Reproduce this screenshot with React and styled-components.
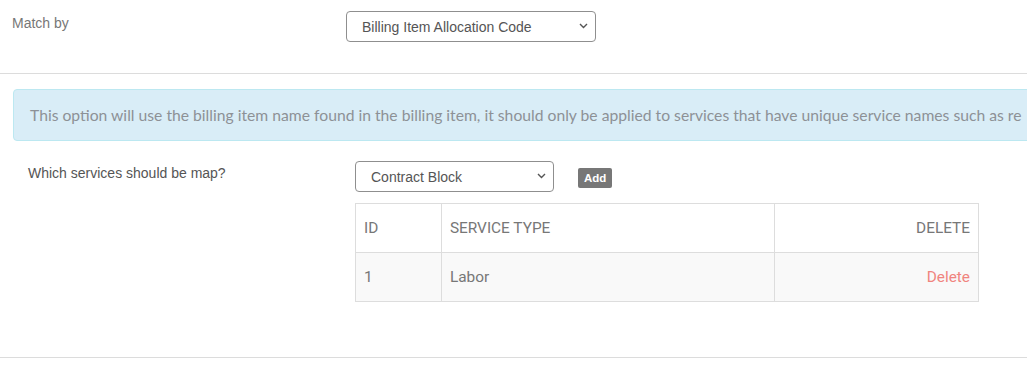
import React from "react";
import styled, { createGlobalStyle } from "styled-components";

const Global = createGlobalStyle`
  html, body { margin: 0; padding: 0; background: #fff; }
  body { font-family: "Liberation Sans", Arial, sans-serif; overflow: hidden; }
`;

const Page = styled.div`
  width: 1027px;
  height: 366px;
  overflow: hidden;
`;

const MatchRow = styled.div`
  display: grid;
  grid-template-columns: 334px 250px;
  padding: 11px 12px 0 12px;
  height: 73px;
  box-sizing: border-box;
`;

const Label = styled.div`
  font-size: 14px;
  line-height: 18px;
  color: ${(p) => p.$color || "#777"};
  padding-top: ${(p) => p.$top || 0}px;
`;

const SelectWrap = styled.div`
  position: relative;
  width: ${(p) => p.$w}px;
  height: 31px;
`;

const Select = styled.select`
  appearance: none;
  -webkit-appearance: none;
  width: 100%;
  height: 100%;
  box-sizing: border-box;
  border: 1px solid #8f8f8f;
  border-radius: 4px;
  background: #fff;
  color: #555;
  font-family: "Liberation Sans", Arial, sans-serif;
  font-size: 14px;
  padding: 0 0 0 15px;
  outline: none;
`;

const Chevron = styled.svg`
  position: absolute;
  right: 8px;
  top: 12px;
  width: 9px;
  height: 6px;
  pointer-events: none;
`;

const Divider = styled.div`
  border-top: 1px solid #dcdcdc;
  width: 100%;
`;

const Alert = styled.div`
  margin: 15px 0 0 13px;
  width: 1100px;
  box-sizing: border-box;
  height: 52px;
  padding: 0 16px;
  background: #d9edf7;
  border: 1px solid #bce8f1;
  border-radius: 4px;
  display: flex;
  align-items: center;
  white-space: nowrap;
  overflow: hidden;
  font-family: Lato, "Open Sans", sans-serif;
  font-size: 15.7px;
  color: #8d9196;
`;

const Services = styled.div`
  display: grid;
  grid-template-columns: 327px 624px;
  padding: 20px 0 0 28px;
  height: 216px;
  box-sizing: border-box;
`;

const Controls = styled.div`
  display: flex;
  align-items: center;
  gap: 24px;
`;

const AddButton = styled.button`
  height: 20px;
  padding: 0 6px;
  border: none;
  border-radius: 2px;
  background: #777;
  color: #fff;
  font-family: "Liberation Sans", Arial, sans-serif;
  font-weight: bold;
  font-size: 11.5px;
  margin-top: 3px;
  cursor: pointer;
`;

const Table = styled.table`
  margin-top: 11px;
  width: 624px;
  border-collapse: collapse;
  font-family: Roboto, sans-serif;
  font-size: 15.4px;
  color: #777;
`;

const Cell = styled.td`
  border: 1px solid #ddd;
  height: 49px;
  padding: 0 8px;
  box-sizing: border-box;
  width: ${(p) => p.$w}px;
  text-align: ${(p) => p.$align || "left"};
  color: ${(p) => p.$color || "inherit"};
  font-weight: 400;
`;

const HeadCell = styled(Cell).attrs({ as: "th" })`
  text-transform: uppercase;
`;

const BodyRow = styled.tr`
  background: #f9f9f9;
`;

const Chev = () => (
  <Chevron viewBox="0 0 9 6">
    <path d="M1 1l3.5 3.5L8 1" fill="none" stroke="#555" strokeWidth="1.4" />
  </Chevron>
);

export default function App() {
  return (
    <Page>
      <Global />
      <MatchRow>
        <Label $top={3}>Match by</Label>
        <SelectWrap $w={250}>
          <Select defaultValue="bia">
            <option value="bia">Billing Item Allocation Code</option>
          </Select>
          <Chev />
        </SelectWrap>
      </MatchRow>
      <Divider />
      <Alert>
        This option will use the billing item name found in the billing item, it should only be applied to services that have unique service names such as re
      </Alert>
      <Services>
        <Label $color="#555" $top={3}>Which services should be map?</Label>
        <div>
          <Controls>
            <SelectWrap $w={199}>
              <Select defaultValue="cb">
                <option value="cb">Contract Block</option>
              </Select>
              <Chev />
            </SelectWrap>
            <AddButton>Add</AddButton>
          </Controls>
          <Table>
            <thead>
              <tr>
                <HeadCell $w={86}>ID</HeadCell>
                <HeadCell $w={334}>Service Type</HeadCell>
                <HeadCell $w={204} $align="right">Delete</HeadCell>
              </tr>
            </thead>
            <tbody>
              <BodyRow>
                <Cell>1</Cell>
                <Cell>Labor</Cell>
                <Cell $align="right" $color="#f0847e">Delete</Cell>
              </BodyRow>
            </tbody>
          </Table>
        </div>
      </Services>
      <Divider />
    </Page>
  );
}
